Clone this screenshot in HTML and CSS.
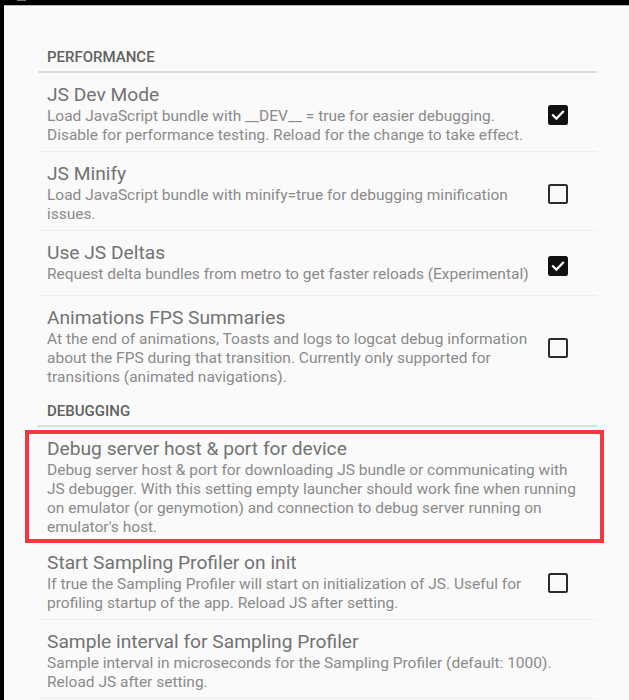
FILE: index.html
```html
<!DOCTYPE html>
<html>
<head>
<meta charset="utf-8">
<link rel="stylesheet" href="styles.css">
</head>
<body>
<div class="frame-top"><span class="tab"></span></div>
<div class="screen">
  <section class="group">
    <h2 class="group-title">PERFORMANCE</h2>
    <div class="pref">
      <div class="pref-text">
        <div class="pref-title">JS Dev Mode</div>
        <div class="pref-summary">Load JavaScript bundle with __DEV__ = true for easier debugging. Disable for performance testing. Reload for the change to take effect.</div>
      </div>
      <span class="checkbox checked"><svg viewBox="0 0 20 20" width="20" height="20"><rect x="0" y="0" width="20" height="20" rx="2.5" fill="#111"/><path d="M5 10.3 L8.4 13.6 L15 6.8" fill="none" stroke="#fff" stroke-width="2.2" stroke-linecap="square"/></svg></span>
    </div>
    <div class="pref">
      <div class="pref-text">
        <div class="pref-title">JS Minify</div>
        <div class="pref-summary">Load JavaScript bundle with minify=true for debugging minification issues.</div>
      </div>
      <span class="checkbox"></span>
    </div>
    <div class="pref">
      <div class="pref-text">
        <div class="pref-title">Use JS Deltas</div>
        <div class="pref-summary">Request delta bundles from metro to get faster reloads (Experimental)</div>
      </div>
      <span class="checkbox checked"><svg viewBox="0 0 20 20" width="20" height="20"><rect x="0" y="0" width="20" height="20" rx="2.5" fill="#111"/><path d="M5 10.3 L8.4 13.6 L15 6.8" fill="none" stroke="#fff" stroke-width="2.2" stroke-linecap="square"/></svg></span>
    </div>
    <div class="pref">
      <div class="pref-text">
        <div class="pref-title">Animations FPS Summaries</div>
        <div class="pref-summary">At the end of animations, Toasts and logs to logcat debug information about the FPS during that transition. Currently only supported for transitions (animated navigations).</div>
      </div>
      <span class="checkbox"></span>
    </div>
  </section>
  <section class="group">
    <h2 class="group-title group-title-next">DEBUGGING</h2>
    <div class="pref pref-wide highlighted">
      <div class="pref-text">
        <div class="pref-title">Debug server host &amp; port for device</div>
        <div class="pref-summary">Debug server host &amp; port for downloading JS bundle or communicating with JS debugger. With this setting empty launcher should work fine when running on emulator (or genymotion) and connection to debug server running on emulator's host.</div>
      </div>
    </div>
    <div class="pref">
      <div class="pref-text">
        <div class="pref-title">Start Sampling Profiler on init</div>
        <div class="pref-summary">If true the Sampling Profiler will start on initialization of JS. Useful for profiling startup of the app. Reload JS after setting.</div>
      </div>
      <span class="checkbox"></span>
    </div>
    <div class="pref pref-wide">
      <div class="pref-text">
        <div class="pref-title">Sample interval for Sampling Profiler</div>
        <div class="pref-summary">Sample interval in microseconds for the Sampling Profiler (default: 1000). Reload JS after setting.</div>
      </div>
    </div>
  </section>
</div>
</body>
</html>
```
FILE: styles.css
```css
html, body {
  margin: 0;
  padding: 0;
  background: #000;
  height: 100%;
  overflow: hidden;
}
body {
  font-family: Roboto, "Liberation Sans", sans-serif;
}
.frame-top {
  height: 5px;
  position: relative;
}
.tab {
  position: absolute;
  left: 17px;
  top: 0;
  width: 9px;
  height: 1px;
  background: #777;
}
.screen {
  margin-left: 4px;
  background: #fafafa;
  min-height: 700px;
  padding: 0 32px 0 34px;
  border-top: 1px solid #bbb;
  box-sizing: border-box;
}
.group-title {
  margin: 0;
  font-size: 15px;
  font-weight: 500;
  line-height: 20px;
  color: #616161;
  padding: 41px 9px 4px;
  border-bottom: 2px solid #dcdcdc;
}
.group-title-next {
  padding-top: 7px;
}
.pref {
  display: flex;
  align-items: center;
  box-sizing: border-box;
  min-height: 65px;
  padding: 10px 29px 6px 9px;
  border-bottom: 1px solid #efefef;
  position: relative;
}
.group:first-child .pref:last-child {
  border-bottom-color: transparent;
}
.pref-wide {
  padding-right: 21px;
}
.pref-text {
  flex: 1;
  min-width: 0;
  align-self: flex-start;
}
.pref-title {
  font-size: 19.2px;
  line-height: 24px;
  color: #727272;
}
.pref-summary {
  font-size: 15.5px;
  line-height: 19px;
  color: #8a8a8a;
}
.checkbox {
  flex: none;
  width: 20px;
  height: 20px;
  box-sizing: border-box;
  border: 2px solid #2a2a2a;
  border-radius: 2.5px;
  margin-left: 14px;
  margin-top: 2px;
  display: block;
}
.checkbox.checked {
  border: none;
}
.checkbox svg {
  display: block;
}
.highlighted {
  padding-bottom: 3px;
}
.highlighted::after {
  content: "";
  position: absolute;
  left: -13px;
  right: -7px;
  top: 3px;
  bottom: -3px;
  border: 4px solid #f2383e;
  pointer-events: none;
}
```
